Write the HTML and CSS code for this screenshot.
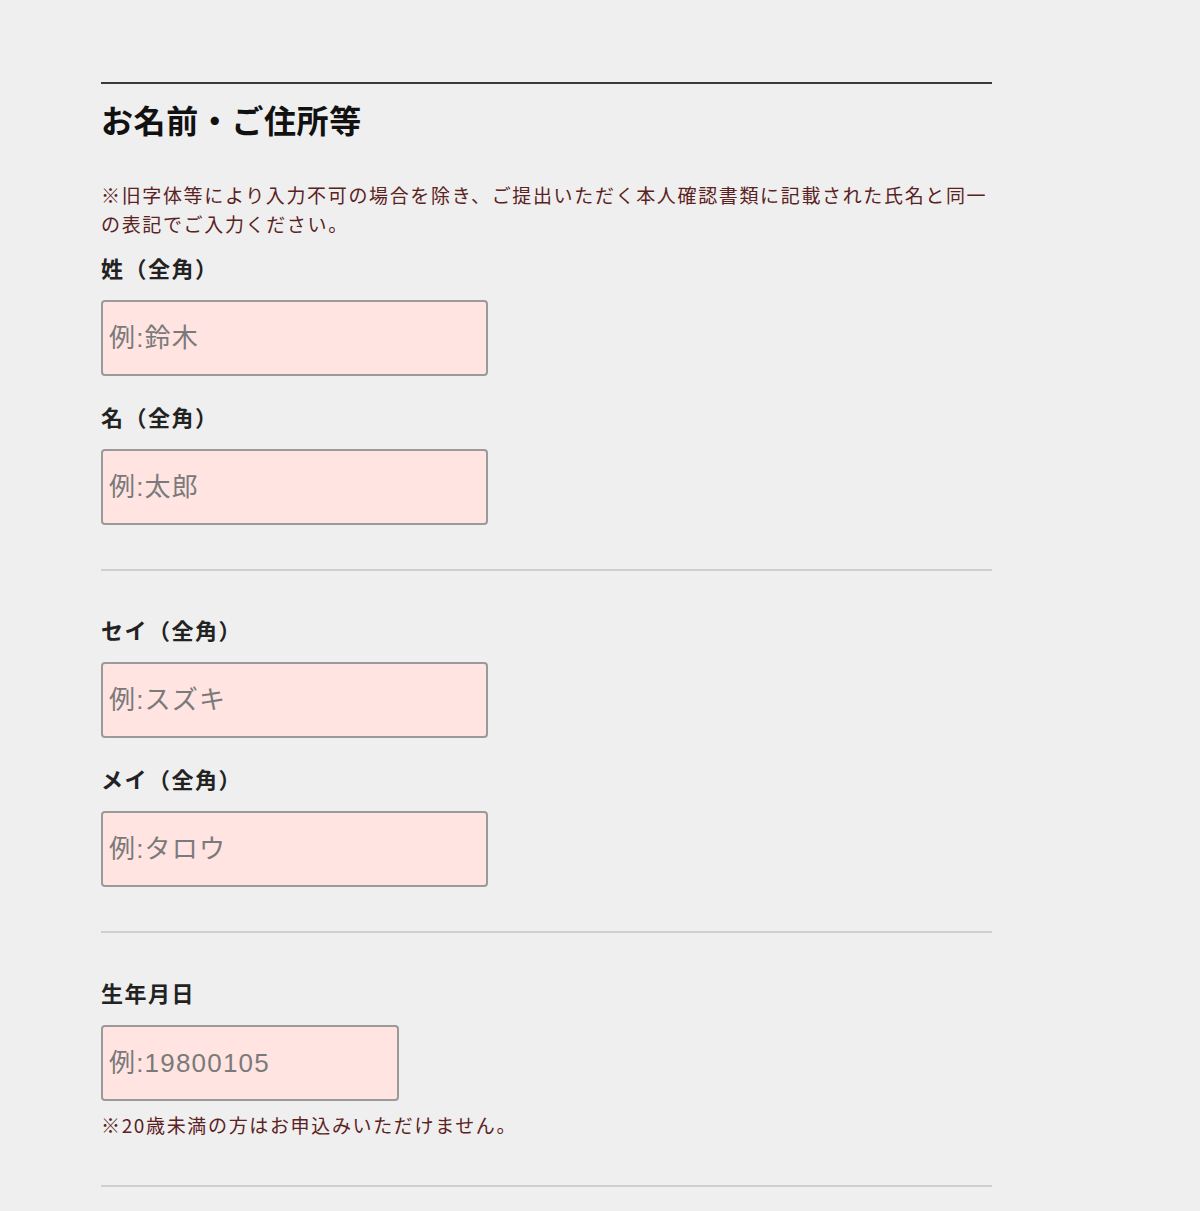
FILE: index.html
```html
<!DOCTYPE html>
<html lang="ja">
<head>
  <meta charset="UTF-8">
  <meta name="viewport" content="width=device-width, initial-scale=1.0">
  <title>お名前・ご住所等</title>
  <link rel="stylesheet" href="styles.css">
</head>
<body>
  <main class="form-wrap">
    <section class="block block-first">
      <h2 class="block-title">お名前・ご住所等</h2>
      <p class="note note-lead">※旧字体等により入力不可の場合を除き、ご提出いただく本人確認書類に記載された氏名と同一の表記でご入力ください。</p>
      <div class="field">
        <label class="field-label" for="sei">姓（全角）</label>
        <input class="field-input" id="sei" type="text" placeholder="例:鈴木">
      </div>
      <div class="field">
        <label class="field-label" for="mei">名（全角）</label>
        <input class="field-input" id="mei" type="text" placeholder="例:太郎">
      </div>
    </section>

    <section class="block">
      <div class="field">
        <label class="field-label" for="sei-kana">セイ（全角）</label>
        <input class="field-input" id="sei-kana" type="text" placeholder="例:スズキ">
      </div>
      <div class="field">
        <label class="field-label" for="mei-kana">メイ（全角）</label>
        <input class="field-input" id="mei-kana" type="text" placeholder="例:タロウ">
      </div>
    </section>

    <section class="block block-last">
      <div class="field">
        <label class="field-label" for="birth">生年月日</label>
        <input class="field-input field-input-short" id="birth" type="text" placeholder="例:19800105">
        <p class="note note-after">※20歳未満の方はお申込みいただけません。</p>
      </div>
    </section>
  </main>
</body>
</html>
```

FILE: styles.css
```css
body {
  margin: 0;
  background-color: #efefef;
  font-family: "Noto Sans CJK JP", "Noto Sans", sans-serif;
  color: #222;
}
.form-wrap {
  width: 891px;
  margin-left: 101px;
  padding-top: 82px;
}
.block {
  border-top: 2px solid #cfcfcf;
  padding: 43px 0 44px;
}
.block-first {
  border-top: 2px solid #3a3a3a;
  padding-top: 13px;
}
.block-last {
  border-bottom: 2px solid #cfcfcf;
  padding-top: 44px;
  padding-bottom: 46px;
}
.block-title {
  margin: 0;
  font-size: 32px;
  line-height: 44px;
  font-weight: bold;
  letter-spacing: 0.6px;
  color: #111;
}
.note {
  margin: 0;
  font-size: 19px;
  line-height: 29px;
  letter-spacing: 1.65px;
  color: #5b2222;
}
.note-lead {
  margin-top: 39px;
  margin-bottom: 14px;
}
.note-after {
  margin-top: 9px;
}
.field {
  display: flex;
  flex-direction: column;
  align-items: flex-start;
}
.field + .field {
  margin-top: 25px;
}
.field-label {
  font-size: 22px;
  line-height: 30px;
  font-weight: bold;
  letter-spacing: 1.5px;
  color: #222;
  margin-bottom: 18px;
}
.field-input {
  box-sizing: border-box;
  width: 387px;
  height: 76px;
  padding: 0 6px;
  border: 2px solid #9a9a9a;
  border-radius: 4px;
  background-color: #ffe4e1;
  font-family: "Liberation Sans", "Noto Sans CJK JP", sans-serif;
  font-size: 26px;
  letter-spacing: 1.2px;
  color: #333;
  outline: none;
}
.field-input::placeholder {
  color: #7a7a7a;
}
.field-input-short {
  width: 298px;
}
```
